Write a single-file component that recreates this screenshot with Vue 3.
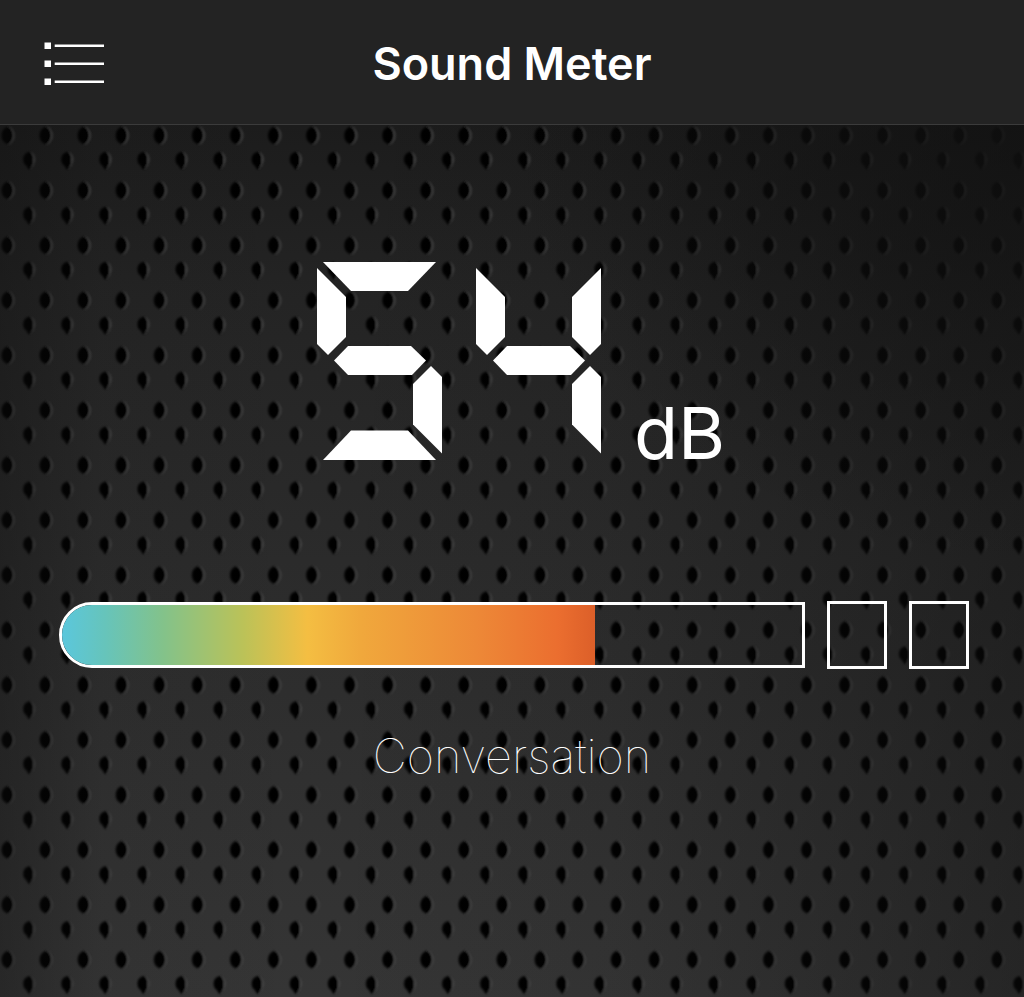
<script setup>
import { computed, ref } from 'vue'

const level = ref(54)
const description = ref('Conversation')
const fillShare = 72

const segments = {
  a: '6,0 119,0 91,29 34,29',
  f: '0,6 29,35 29,75 11,93 0,82',
  b: '125,6 96,35 96,75 114,93 125,82',
  g: '17,98.5 31,84 94,84 109,98.5 95,113 31,113',
  e: '0,191 29,162 29,122 11,104 0,115',
  c: '114,104 125,115 125,191.5 96,162.5 96,122',
  d: '34,168.5 91,168.5 119,198 6,198',
}
const lit = ['abcdef', 'bc', 'abdeg', 'abcdg', 'bcfg', 'acdfg', 'acdefg', 'abc', 'abcdefg', 'abcdfg']

const digits = computed(() => [...String(level.value)].map((n) => [...lit[Number(n)]]))
</script>

<template>
  <div class="app">
    <header class="bar">
      <button class="menu" type="button" aria-label="Menu">
        <svg width="60" height="44" viewBox="0 0 60 44" aria-hidden="true">
          <g v-for="row in 3" :key="row" :transform="`translate(0 ${(row - 1) * 18})`" fill="#fff">
            <rect x="0.5" y="0.5" width="6.5" height="6.5" />
            <rect x="10.7" y="2.5" width="49.3" height="2.5" />
          </g>
        </svg>
      </button>
      <h1 class="title">Sound Meter</h1>
    </header>

    <main class="panel">
      <svg class="mesh" aria-hidden="true">
        <defs>
          <linearGradient id="metal" x1="0" y1="0" x2="0" y2="1">
            <stop offset="0" stop-color="#1c1c1c" />
            <stop offset="0.2" stop-color="#242424" />
            <stop offset="0.5" stop-color="#2b2b2b" />
            <stop offset="0.75" stop-color="#303030" />
            <stop offset="1" stop-color="#353535" />
          </linearGradient>
          <linearGradient id="sides" x1="0" y1="0" x2="1" y2="0">
            <stop offset="0" stop-color="#0f0f0f" stop-opacity="0.35" />
            <stop offset="0.1" stop-color="#0f0f0f" stop-opacity="0.06" />
            <stop offset="0.3" stop-color="#0f0f0f" stop-opacity="0" />
            <stop offset="0.6" stop-color="#0f0f0f" stop-opacity="0.06" />
            <stop offset="1" stop-color="#0f0f0f" stop-opacity="0.4" />
          </linearGradient>
          <radialGradient id="corner" cx="1" cy="0" r="0.5">
            <stop offset="0" stop-color="#121212" stop-opacity="0.75" />
            <stop offset="1" stop-color="#121212" stop-opacity="0" />
          </radialGradient>
          <filter id="soft" x="-30%" y="-30%" width="160%" height="160%">
            <feGaussianBlur stdDeviation="0.8" />
          </filter>
          <pattern id="holes" width="38.08" height="54.95" patternUnits="userSpaceOnUse" x="-11.5" y="-9">
            <g filter="url(#soft)">
              <path d="M20 10.5C24 11.500 26 15.500 26 19.500C26 24 23.500 27.500 20 29Z" fill="#4d4d4d" />
              <path d="M19 10.500C23 12 24.500 16 24.500 19.500C24.500 23.500 23 26.500 19.500 28.500C15.500 27 13 24 13 19.500C13 15 15.500 12 19 10.500Z" fill="#030303" />
            </g>
          </pattern>
          <pattern id="holesOffset" width="38.08" height="54.95" patternUnits="userSpaceOnUse" x="10" y="16">
            <g filter="url(#soft)">
              <path d="M19 11C23 11 25 14.500 25 18.500C25 23 22.500 27 19.500 28.500Z" fill="#4d4d4d" />
              <path d="M19 11C22 11.500 23.500 14.500 23.500 18.500C23.500 23 22 26.500 19.500 28.500C17.500 28.500 17.500 25.500 16 24.500C14 23 13.200 21 13.200 18.500C13.200 14 16 11.500 19 11Z" fill="#060606" />
            </g>
          </pattern>
        </defs>
        <rect width="100%" height="100%" fill="url(#metal)" />
        <rect width="100%" height="100%" fill="url(#holes)" />
        <rect width="100%" height="100%" fill="url(#holesOffset)" />
        <rect width="100%" height="100%" fill="url(#sides)" />
        <rect width="100%" height="100%" fill="url(#corner)" />
      </svg>

      <div class="reading">
        <div class="digits" role="img" :aria-label="String(level)">
          <svg v-for="(digit, i) in digits" :key="i" width="126" height="198" viewBox="0 0 126 198">
            <polygon v-for="s in digit" :key="s" :points="segments[s]" fill="#fff" />
          </svg>
        </div>
        <span class="unit">dB</span>
      </div>

      <div class="gauge">
        <div class="track" role="meter" aria-label="Sound level" aria-valuemin="0" aria-valuemax="100" :aria-valuenow="level">
          <div class="fill" :style="{ width: fillShare + '%' }"></div>
        </div>
        <div class="peak"></div>
        <div class="peak"></div>
      </div>

      <p class="description">{{ description }}</p>
    </main>
  </div>
</template>

<style>
body {
  background: #222;
}
</style>

<style scoped>
.app {
  min-height: 100vh;
  display: flex;
  flex-direction: column;
  color: #fff;
  font-family: Inter, "Liberation Sans", sans-serif;
}

.bar {
  display: grid;
  grid-template-columns: 1fr auto 1fr;
  align-items: center;
  height: 124px;
  padding: 0 44px;
  background: #232323;
  border-bottom: 1px solid #3b3b3b;
}

.menu {
  display: flex;
  justify-self: start;
  padding: 4px 0 0;
  border: 0;
  background: none;
}

.title {
  margin: 0;
  padding-top: 4px;
  font-size: 45px;
  line-height: 56px;
  font-weight: 600;
}

.panel {
  position: relative;
  isolation: isolate;
  flex: 1;
  padding: 137px 0 64px;
}

.mesh {
  position: absolute;
  inset: 0;
  width: 100%;
  height: 100%;
  z-index: -1;
}

.reading {
  display: flex;
  justify-content: center;
  align-items: flex-end;
  gap: 32px;
  padding-left: 18px;
}

.digits {
  display: flex;
  gap: 33px;
}

.unit {
  font-size: 72px;
  line-height: 54px;
}

.gauge {
  display: flex;
  align-items: center;
  gap: 22px;
  margin-top: 141px;
  padding: 0 55px 0 59px;
}

.track {
  box-sizing: border-box;
  flex: 1;
  height: 66px;
  border: 3px solid #fff;
  border-radius: 33px 0 0 33px;
  overflow: hidden;
}

.fill {
  height: 100%;
  background: linear-gradient(
    to right,
    #5bc7dc 0%,
    #66c4bb 8%,
    #83c28a 19%,
    #bbc258 34%,
    #f4be42 46%,
    #f0a83c 56%,
    #ed8837 78%,
    #eb6e2f 93%,
    #dc5f29 100%
  );
}

.peak {
  box-sizing: border-box;
  width: 60px;
  height: 68px;
  border: 3px solid #fff;
}

.description {
  margin: 58px 0 0;
  text-align: center;
  font-size: 47px;
  line-height: 58px;
  font-weight: 100;
  color: #fff;
}
</style>
